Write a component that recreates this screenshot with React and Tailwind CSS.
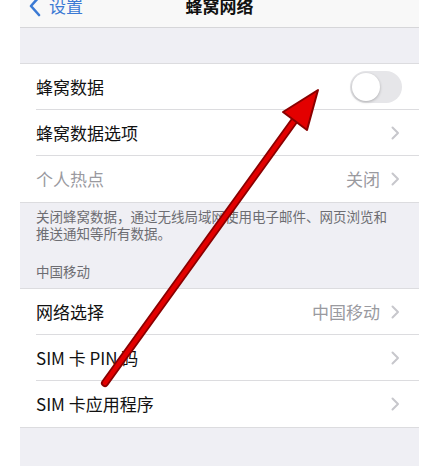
import React from 'react'

const font = { fontFamily: '"Noto Sans CJK SC", "Noto Sans", sans-serif' }

function Chevron() {
  return (
    <svg width="9" height="14" viewBox="0 0 9 14" className="shrink-0">
      <polyline points="1.5,1.5 7,7 1.5,12.5" fill="none" stroke="#c7c7cc" strokeWidth="2" strokeLinecap="round" strokeLinejoin="round" />
    </svg>
  )
}

function Row({ label, value, chevron = true, dim = false, last = false, children }) {
  return (
    <div className="pl-4 bg-white">
      <div className={`h-[46px] flex items-center pr-[19px] ${last ? '' : 'border-b border-[#dcdcdf]'}`}>
        <span className={`flex-1 text-[17px] ${dim ? 'text-[#9a9a9f]' : 'text-[#111]'}`}>{label}</span>
        {value && <span className="text-[17px] text-[#9a9a9f] mr-[11px]">{value}</span>}
        {chevron && <Chevron />}
        {children}
      </div>
    </div>
  )
}

function Toggle() {
  return (
    <div className="w-[52px] h-[32px] rounded-full bg-[#e6e6e9] p-[2px] -mr-[2px]">
      <div className="w-[28px] h-[28px] rounded-full bg-white shadow-[0_1px_3px_rgba(0,0,0,0.25)]" />
    </div>
  )
}

function Arrow() {
  return (
    <svg className="absolute inset-0 pointer-events-none" width="440" height="466" viewBox="0 0 440 466">
      <line x1="105" y1="383" x2="297" y2="117" stroke="#8a0000" strokeWidth="8" strokeLinecap="round" />
      <line x1="105" y1="383" x2="297" y2="117" stroke="#e30000" strokeWidth="4.5" strokeLinecap="round" />
      <polygon points="318,90 307,130 283,112" fill="#e30000" stroke="#8a0000" strokeWidth="2" strokeLinejoin="round" />
    </svg>
  )
}

export default function App() {
  return (
    <div className="relative w-[440px] h-[466px] bg-white overflow-hidden" style={font}>
      <div className="ml-[20px] w-[399px] h-full bg-[#efeff4] flex flex-col">
        {/* nav bar, top cut off */}
        <div className="-mt-[16px] h-[44px] shrink-0 bg-[#f8f8f8] border-b border-[#d6d6d9] flex items-center relative">
          <div className="flex items-center pl-[8px] text-[#3b7ad4]">
            <svg width="14" height="22" viewBox="0 0 14 22">
              <polyline points="11,2 3,11 11,20" fill="none" stroke="#3b7ad4" strokeWidth="2.6" strokeLinecap="round" strokeLinejoin="round" />
            </svg>
            <span className="text-[17px] ml-[7px]">设置</span>
          </div>
          <span className="absolute left-0 right-0 text-center text-[17px] font-semibold text-[#111]">蜂窝网络</span>
        </div>

        <div className="h-[36px] shrink-0 border-b border-[#dcdcdf]" />

        <Row label="蜂窝数据" chevron={false}>
          <Toggle />
        </Row>
        <Row label="蜂窝数据选项" />
        <Row label="个人热点" value="关闭" dim last />

        <div className="border-t border-[#dcdcdf] pl-4 pr-2 pt-[5px] text-[13.5px] leading-[17px] text-[#6d6d72]">
          <p className="whitespace-nowrap">关闭蜂窝数据，通过无线局域网使用电子邮件、网页浏览和<br />推送通知等所有数据。</p>
          <p className="mt-[21px] mb-[8px]">中国移动</p>
        </div>

        <div className="border-t border-b border-[#dcdcdf]">
          <Row label="网络选择" value="中国移动" />
          <Row label="SIM 卡 PIN 码" />
          <Row label="SIM 卡应用程序" last />
        </div>
      </div>
      <Arrow />
    </div>
  )
}
